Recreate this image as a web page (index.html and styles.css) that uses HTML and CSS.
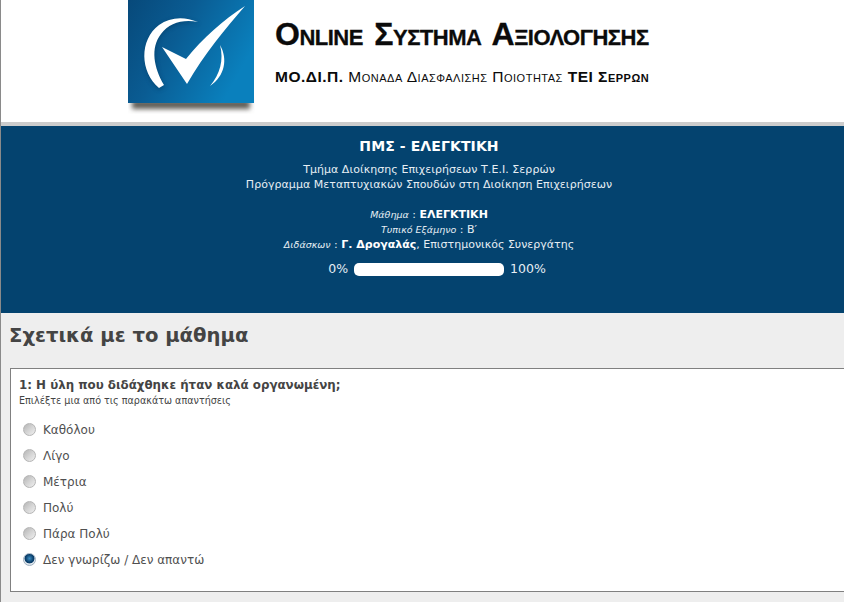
FILE: index.html
```html
<!DOCTYPE html>
<html lang="el">
<head>
<meta charset="utf-8">
<title>Online Σύστημα Αξιολόγησης</title>
<link rel="stylesheet" href="styles.css">
</head>
<body>
<div class="page">
  <header class="top">
    <svg class="logo" width="127" height="118" viewBox="0 0 127 118" aria-hidden="true">
      <defs>
        <linearGradient id="lg" x1="0" y1="0" x2="1" y2="0.45">
          <stop offset="0" stop-color="#07497a"/>
          <stop offset="0.45" stop-color="#0a5c93"/>
          <stop offset="1" stop-color="#0a80bd"/>
        </linearGradient>
        <filter id="blur" x="-10%" y="-50%" width="120%" height="200%">
          <feGaussianBlur stdDeviation="2.5"/>
        </filter>
        <filter id="soft" x="-20%" y="-20%" width="140%" height="140%">
          <feGaussianBlur stdDeviation="2"/>
        </filter>
      </defs>
      <rect x="4" y="100" width="118" height="9" fill="#5f5b55" filter="url(#blur)"/>
      <rect width="126" height="103" fill="url(#lg)"/>
      <path d="M30 90 C12 72 12 42 30 27 C41 18 56 17 72 24 C56 21 41 25 33 36 C24 50 27 70 37 87 Z" fill="#05365c" opacity="0.45" filter="url(#soft)"/>
      <path d="M31 88 C12 72 11 40 31 25 C42 17 56 16 70 22 C55 19 41 23 33 34 C22 48 26 68 36 85 Z" fill="#fff"/>
      <path d="M92 45 C100 59 97 76 82 86 C92 74 96 60 92 45 Z" fill="#fff"/>
      <path d="M34 47 L58 59 C75 38 95 20 117 6 C98 28 76 54 59 84 Z" fill="#fff"/>
    </svg>
    <div class="brand">
      <div class="brand-main">Online Συστημα Αξιολογησης</div>
      <div class="brand-sub"><b>ΜΟ.ΔΙ.Π.</b> Μοναδα Διασφαλισης Ποιοτητας <b>ΤΕΙ Σερρων</b></div>
    </div>
  </header>
  <section class="banner">
    <h1 class="banner-title">ΠΜΣ - ΕΛΕΓΚΤΙΚΗ</h1>
    <p class="banner-dept">Τμήμα Διοίκησης Επιχειρήσεων Τ.Ε.Ι. Σερρών<br>Πρόγραμμα Μεταπτυχιακών Σπουδών στη Διοίκηση Επιχειρήσεων</p>
    <div class="meta">
      <div class="meta-row"><i>Μάθημα</i> : <b>ΕΛΕΓΚΤΙΚΗ</b></div>
      <div class="meta-row"><i>Τυπικό Εξάμηνο</i> : Β′</div>
      <div class="meta-row"><i>Διδάσκων</i> : <b>Γ. Δρογαλάς</b>, Επιστημονικός Συνεργάτης</div>
    </div>
    <div class="progress"><span>0%</span><div class="bar"></div><span>100%</span></div>
  </section>
  <main class="content">
    <h2 class="section-title">Σχετικά με το μάθημα</h2>
    <form class="question">
      <div class="q-title">1: Η ύλη που διδάχθηκε ήταν καλά οργανωμένη;</div>
      <div class="q-hint">Επιλέξτε μια από τις παρακάτω απαντήσεις</div>
      <div class="options">
        <label class="option"><input type="radio" name="q1">Καθόλου</label>
        <label class="option"><input type="radio" name="q1">Λίγο</label>
        <label class="option"><input type="radio" name="q1">Μέτρια</label>
        <label class="option"><input type="radio" name="q1">Πολύ</label>
        <label class="option"><input type="radio" name="q1">Πάρα Πολύ</label>
        <label class="option"><input type="radio" name="q1" checked>Δεν γνωρίζω / Δεν απαντώ</label>
      </div>
    </form>
  </main>
</div>
</body>
</html>
```
FILE: styles.css
```css
html, body {
  margin: 0;
  padding: 0;
  height: 100%;
  overflow: hidden;
}
body {
  background: #eeeeee;
  color: #444444;
  font-family: "DejaVu Sans", Verdana, sans-serif;
}
.page {
  border-left: 1px solid #8a8a8a;
  height: 602px;
  background: #eeeeee;
}
.top {
  display: flex;
  height: 122px;
  padding-left: 127px;
  background: #ffffff;
  border-bottom: 4px solid #cccccc;
  overflow: hidden;
}
.logo {
  flex: none;
  display: block;
}
.brand {
  margin-left: 20px;
  color: #0b0b0b;
  font-family: "Liberation Sans", Arial, sans-serif;
  font-variant: small-caps;
}
.brand-main {
  margin-top: 14px;
  font-size: 32px;
  line-height: 40px;
  font-weight: bold;
  letter-spacing: -0.5px;
  word-spacing: 3px;
  -webkit-text-stroke: 0.3px #0b0b0b;
  white-space: nowrap;
}
.brand-sub {
  margin-top: 13px;
  font-size: 15.5px;
  line-height: 20px;
  letter-spacing: 0.5px;
  white-space: nowrap;
}
.banner {
  height: 187px;
  box-sizing: border-box;
  padding: 12px 0 0 13px;
  background: #04436f;
  color: #e6eef4;
  text-align: center;
  font-size: 11px;
  line-height: 15px;
}
.banner-title {
  margin: 0;
  font-size: 14px;
  line-height: 17px;
  font-weight: bold;
  letter-spacing: 0.1px;
  color: #ffffff;
}
.banner-dept {
  margin: 7px 0 0;
  letter-spacing: 0.05px;
}
.meta {
  margin-top: 15px;
}
.meta-row i {
  font-size: 9.5px;
}
.meta-row b {
  color: #ffffff;
}
.progress {
  display: flex;
  justify-content: center;
  align-items: center;
  gap: 6px;
  margin: 9px 0 0 16px;
  font-size: 12.5px;
  line-height: 16px;
}
.bar {
  width: 150px;
  height: 13px;
  border-radius: 5px;
  background: #ffffff;
}
.content {
  padding: 9px 0 0 9px;
}
.section-title {
  margin: 0 0 0 -1px;
  font-size: 19.6px;
  line-height: 28px;
  font-weight: bold;
  color: #444444;
}
.question {
  margin-top: 18px;
  height: 224px;
  box-sizing: border-box;
  padding: 9px 8px;
  background: #ffffff;
  border: 1px solid #808080;
  border-right: 0;
}
.q-title {
  font-size: 11.85px;
  line-height: 15px;
  font-weight: bold;
}
.q-hint {
  font-size: 9.6px;
  line-height: 15px;
}
.options {
  display: flex;
  flex-direction: column;
  margin-top: 9px;
}
.option {
  display: flex;
  align-items: center;
  height: 26px;
  padding-left: 4px;
  font-size: 12px;
  color: #505050;
}
.option input {
  appearance: none;
  flex: none;
  box-sizing: border-box;
  width: 13px;
  height: 13px;
  margin: 0 7px 2px 0;
  border: 1px solid #b5b5b5;
  border-radius: 50%;
  background: linear-gradient(135deg, #b4b4b4 0, #d4d4d4 50%, #f0f0f0 100%);
}
.option input:checked {
  border-color: #9fb0c0;
  background: radial-gradient(circle at 50% 40%, #3d8fc4 0, #0b3f6b 45%, #0b3f6b 55%, #e6ecf1 62%, #c6ced6 100%);
}
```
